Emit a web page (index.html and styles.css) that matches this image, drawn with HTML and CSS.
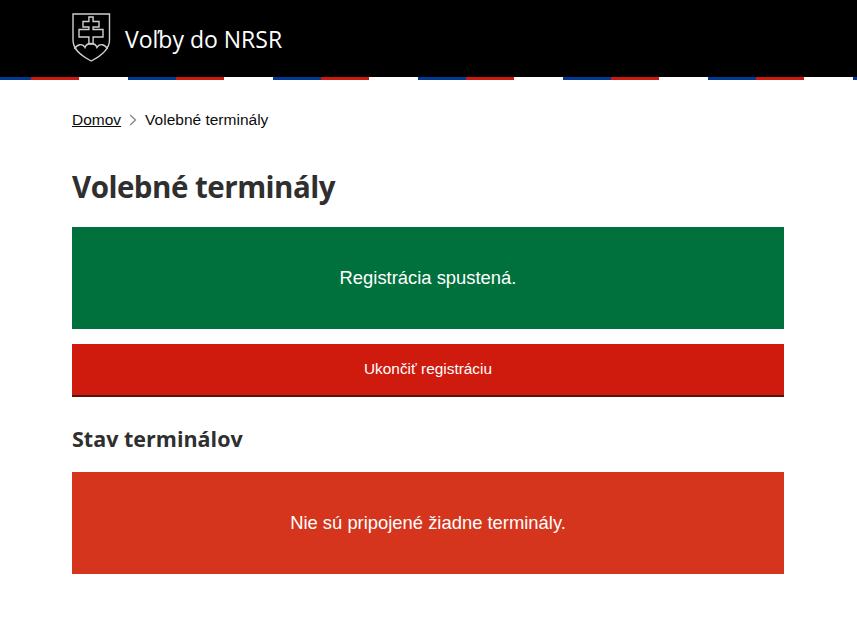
FILE: index.html
```html
<!DOCTYPE html>
<html lang="sk">
<head>
    <meta charset="utf-8">
    <title>Volebné terminály</title>
    <link rel="stylesheet" href="styles.css">
</head>
<body>
    <header class="site-header">
        <div class="header-inner">
            <svg class="crest" width="40" height="49" viewBox="0 0 40 49" fill="none" stroke="#cfcfcf" stroke-width="1.4">
                <path d="M1 1H37.500V27C37.500 37 29 43 19.200 48C9.500 43 1 37 1 27Z"/>
                <path d="M16.900 4H21.100V8.500H27V14H21.100V16.500H31V24H21.100V31H16.900V24H7V16.500H16.900V14H11V8.500H16.900Z"/>
                <path d="M2.500 36C5 31 10.500 30 13 34.500C14 31.500 16.500 30.500 19 30.500C21.500 30.500 24 31.500 25 34.500C27.500 30 33 31 35.500 36"/>
            </svg>
            <span class="site-title">Voľby do NRSR</span>
        </div>
    </header>
    <div class="flag-stripe"></div>

    <main class="content">
        <nav class="breadcrumbs">
            <a href="#">Domov</a>
            <svg class="crumb-sep" width="8" height="12" viewBox="0 0 8 12" fill="none" stroke="#8a8a8a" stroke-width="1.4">
                <path d="M1.200 1L6.500 6L1.200 11"/>
            </svg>
            <span>Volebné terminály</span>
        </nav>

        <h1>Volebné terminály</h1>

        <div class="panel panel-green">Registrácia spustená.</div>

        <button class="stop-button" type="button">Ukončiť registráciu</button>

        <h2>Stav terminálov</h2>

        <div class="panel panel-red">Nie sú pripojené žiadne terminály.</div>
    </main>
</body>
</html>
```

FILE: styles.css
```css
body {
    margin: 0;
    font-family: "Liberation Sans", Arial, sans-serif;
    color: #0b0c0c;
    background: white;
}

.site-header {
    background: black;
    height: 77px;
}

.header-inner {
    display: flex;
    align-items: center;
    gap: 14px;
    padding: 13px 72px 0;
}

.crest {
    flex: none;
}

.site-title {
    font-family: "Open Sans", sans-serif;
    font-size: 23px;
    color: white;
    margin-top: 3px;
    margin-left: -1px;
}

.flag-stripe {
    height: 3px;
    background: repeating-linear-gradient(90deg,
        #003a94 -17px, #003a94 31px,
        #d0190e 31px, #d0190e 79px,
        white 79px, white 128px);
}

.content {
    padding: 0 73px 0 72px;
}

.breadcrumbs {
    display: flex;
    align-items: center;
    gap: 8px;
    margin-top: 30px;
    font-size: 15.500px;
    line-height: 20px;
}

.breadcrumbs a {
    color: #0b0c0c;
}

h1 {
    font-family: "Open Sans", sans-serif;
    font-weight: 700;
    font-size: 29.500px;
    letter-spacing: -0.500px;
    line-height: 40px;
    color: #2f2f2f;
    margin: 37px 0 20px;
}

h2 {
    font-family: "Open Sans", sans-serif;
    font-weight: 700;
    font-size: 21.500px;
    line-height: 28px;
    color: #2f2f2f;
    margin: 28px 0 19px;
}

.panel {
    height: 102px;
    display: flex;
    align-items: center;
    justify-content: center;
    font-size: 18.400px;
    color: white;
}

.panel-green {
    background: #00703c;
}

.panel-red {
    background: #d4351c;
}

.stop-button {
    display: block;
    width: 100%;
    height: 53px;
    margin-top: 15px;
    padding: 0 0 1px;
    border: none;
    border-bottom: 2px solid #55150b;
    background: #cf1a0e;
    color: white;
    font-family: inherit;
    font-size: 15.400px;
}
```
